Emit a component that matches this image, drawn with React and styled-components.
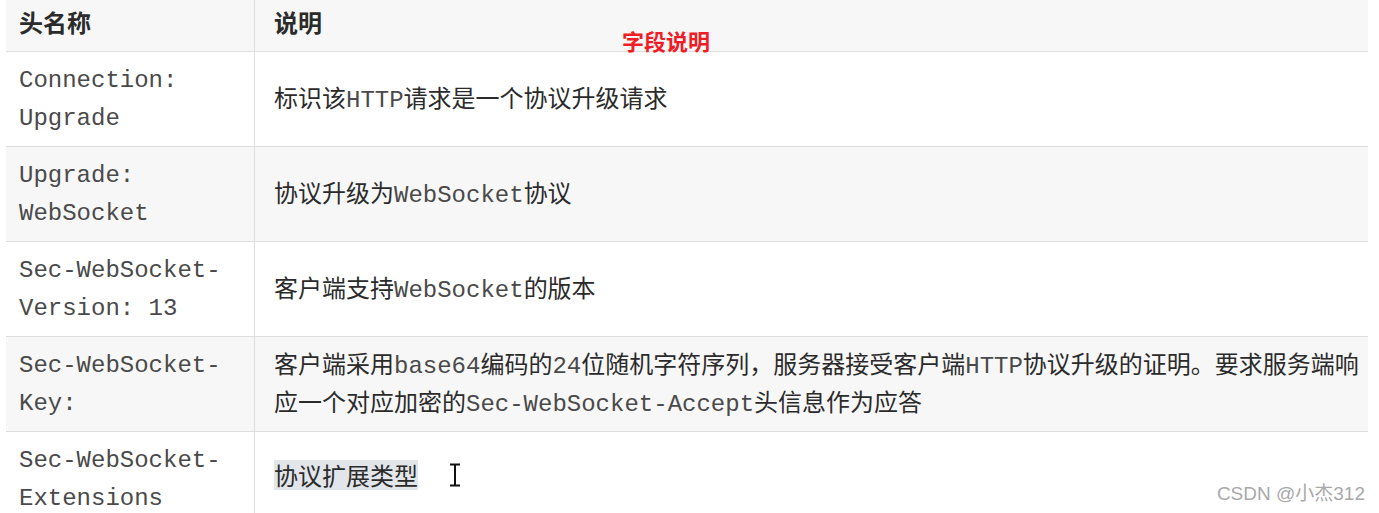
import React from 'react';
import styled, { createGlobalStyle } from 'styled-components';

const GlobalStyle = createGlobalStyle`
  html, body {
    margin: 0;
    padding: 0;
    background: #fff;
  }
  body {
    width: 1379px;
    height: 513px;
    overflow: hidden;
    font-family: "Noto Sans CJK SC", "Liberation Sans", sans-serif;
    color: #2b2b2b;
  }
`;

const Page = styled.div`
  position: relative;
  height: 513px;
  padding: 0 11px 0 6px;
  overflow: hidden;
`;

const Table = styled.div`
  display: flex;
  flex-direction: column;
`;

const Row = styled.div`
  display: flex;
  background: ${(p) => (p.$shaded ? '#f7f7f7' : '#fff')};
  border-bottom: 1px solid #dedede;
`;

const NameCell = styled.div`
  width: 249px;
  flex-shrink: 0;
  box-sizing: border-box;
  border-right: 1px solid #dedede;
  padding: ${(p) => (p.$head ? '3px 13px 10px' : '10px 13px 8px')};
  font-size: 24px;
  line-height: 38px;
  font-family: ${(p) => (p.$head ? '"Noto Sans CJK SC", sans-serif' : '"Liberation Mono", monospace')};
  font-weight: ${(p) => (p.$head ? 700 : 400)};
  color: ${(p) => (p.$head ? '#2b2b2b' : '#4a4a4a')};
`;

const DescCell = styled.div`
  flex: 1;
  display: flex;
  align-items: ${(p) => (p.$head ? 'flex-start' : 'center')};
  padding: ${(p) => (p.$head ? '3px 4px 10px 19px' : '7px 4px 11px 19px')};
  font-size: 24px;
  line-height: 38px;
  font-weight: ${(p) => (p.$head ? 700 : 400)};
`;

const Text = styled.div``;

const Code = styled.span`
  font-family: "Liberation Mono", monospace;
  line-height: 1;
  color: #4a4a4a;
`;

const Selected = styled.span`
  display: inline-block;
  height: 30px;
  margin-top: 2px;
  line-height: 30px;
  background: #e2e5e9;
  vertical-align: top;
`;

const Cursor = styled.svg`
  display: inline-block;
  vertical-align: top;
  margin: 5px 0 0 30px;
`;

const Note = styled.div`
  position: absolute;
  left: 622px;
  top: 28px;
  font-size: 22px;
  line-height: 24px;
  font-weight: 700;
  color: #f01c26;
`;

const Watermark = styled.div`
  position: absolute;
  right: 14px;
  top: 483px;
  font-family: "Liberation Sans", "Noto Sans CJK SC", sans-serif;
  font-size: 19px;
  line-height: 22px;
  color: #a9a9a9;
`;

const rows = [
  {
    name: 'Connection: Upgrade',
    desc: (
      <>
        标识该<Code>HTTP</Code>请求是一个协议升级请求
      </>
    ),
  },
  {
    name: 'Upgrade: WebSocket',
    desc: (
      <>
        协议升级为<Code>WebSocket</Code>协议
      </>
    ),
  },
  {
    name: 'Sec-WebSocket-Version: 13',
    desc: (
      <>
        客户端支持<Code>WebSocket</Code>的版本
      </>
    ),
  },
  {
    name: 'Sec-WebSocket-Key:',
    desc: (
      <>
        客户端采用<Code>base64</Code>编码的<Code>24</Code>位随机字符序列，服务器接受客户端<Code>HTTP</Code>
        协议升级的证明。要求服务端响应一个对应加密的<Code>Sec-WebSocket-Accept</Code>头信息作为应答
      </>
    ),
  },
  {
    name: 'Sec-WebSocket-Extensions',
    desc: (
      <>
        <Selected>协议扩展类型</Selected>
        <Cursor width="14" height="24" viewBox="0 0 14 24">
          <path d="M2 1.5h10M7 1.5v21M2 22.5h10" stroke="#111" strokeWidth="2" fill="none" />
        </Cursor>
      </>
    ),
  },
];

export default function App() {
  return (
    <Page>
      <GlobalStyle />
      <Table>
        <Row $shaded>
          <NameCell $head>头名称</NameCell>
          <DescCell $head>说明</DescCell>
        </Row>
        {rows.map((r, i) => (
          <Row key={r.name} $shaded={i % 2 === 1}>
            <NameCell>{r.name}</NameCell>
            <DescCell>
              <Text>{r.desc}</Text>
            </DescCell>
          </Row>
        ))}
      </Table>
      <Note>字段说明</Note>
      <Watermark>CSDN @小杰312</Watermark>
    </Page>
  );
}
